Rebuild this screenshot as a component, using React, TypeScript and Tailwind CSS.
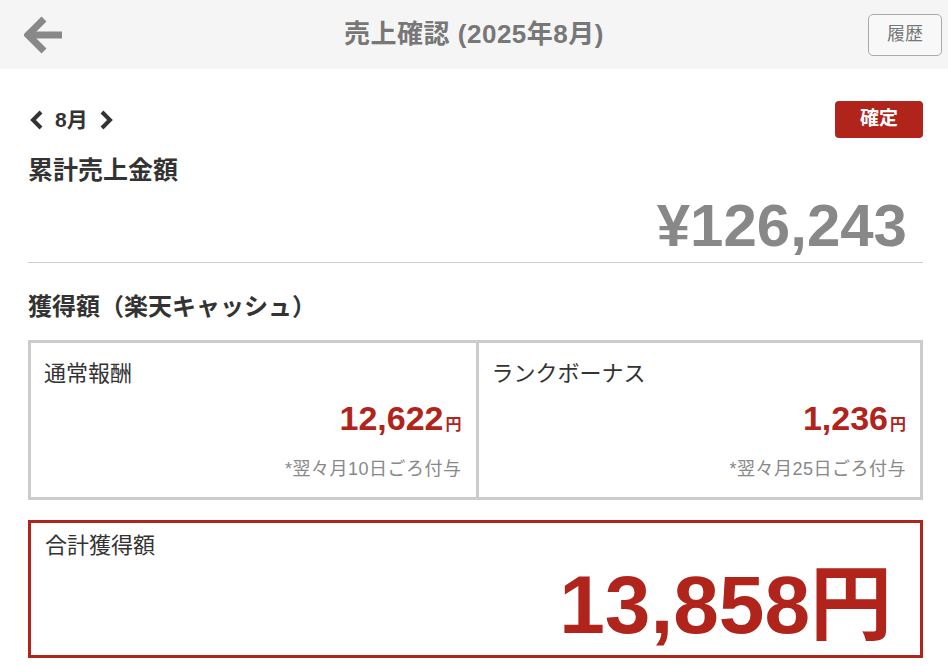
import React from 'react';

const RED = 'text-[#b0241c]';

const RewardCell: React.FC<{ label: string; amount: string; note: string; divider?: boolean }> = ({
  label,
  amount,
  note,
  divider,
}) => (
  <div className={`flex flex-col pl-[13px] pr-[14px] pt-[16px] pb-[15px] ${divider ? 'border-l-[3px] border-[#cccccc]' : ''}`}>
    <div className="text-[22px] leading-[30px] text-[#333]">{label}</div>
    <div className={`mt-[8px] flex items-baseline justify-end font-bold ${RED}`}>
      <span className="text-[34px] leading-[42px]">{amount}</span>
      <span className="ml-[2px] text-[16px]">円</span>
    </div>
    <div className="mt-[17px] text-right text-[18px] leading-[26px] tracking-[0.5px] text-[#888]">{note}</div>
  </div>
);

export default function App() {
  return (
    <div className="min-h-screen bg-white font-['Liberation_Sans','Noto_Sans_CJK_JP',sans-serif] text-[#333]">
      {/* Top bar */}
      <header className="grid h-[69px] grid-cols-[1fr_auto_1fr] items-center bg-[#f5f5f5]">
        <div className="pl-[24px]">
          <svg width="40" height="40" viewBox="0 0 40 40" className="block">
            <path d="M20 4 L4 20 L20 36" fill="none" stroke="#888" strokeWidth="7" strokeLinejoin="miter" />
            <path d="M6 20 H38" stroke="#888" strokeWidth="7" />
          </svg>
        </div>
        <h1 className="text-[26px] font-bold tracking-[0.5px] text-[#777]">売上確認 (2025年8月)</h1>
        <div className="flex justify-end pr-[6px]">
          <button className="h-[42px] w-[74px] rounded-[5px] border border-[#aaa] bg-[#f8f8f8] text-[18px] text-[#777]">
            履歴
          </button>
        </div>
      </header>

      <main className="pl-[28px] pr-[25px] pt-[32px]">
        {/* Month switcher */}
        <div className="flex items-center justify-between">
          <div className="flex items-center gap-[11px] pl-[1px] text-[21px] font-bold text-[#333]">
            <svg width="15" height="20" viewBox="0 0 15 20">
              <path d="M12 2 L4 10 L12 18" fill="none" stroke="#333" strokeWidth="4" />
            </svg>
            <span>8月</span>
            <svg width="15" height="20" viewBox="0 0 15 20">
              <path d="M3 2 L11 10 L3 18" fill="none" stroke="#333" strokeWidth="4" />
            </svg>
          </div>
          <button className="h-[37px] w-[88px] rounded-[4px] bg-[#b0241c] text-[19px] font-bold text-white">確定</button>
        </div>

        {/* Cumulative sales */}
        <h2 className="mt-[14px] text-[25px] font-bold leading-[36px]">累計売上金額</h2>
        <div className="mt-[6px] pr-[16px] text-right text-[60px] font-bold leading-[64px] text-[#888]">¥126,243</div>
        <hr className="mt-[4px] border-t border-[#cccccc]" />

        <h2 className="mt-[26px] text-[24px] font-bold leading-[36px]">獲得額（楽天キャッシュ）</h2>

        {/* Reward breakdown */}
        <div className="mt-[15px] grid grid-cols-2 border-[3px] border-[#cccccc]">
          <RewardCell label="通常報酬" amount="12,622" note="*翌々月10日ごろ付与" />
          <RewardCell label="ランクボーナス" amount="1,236" note="*翌々月25日ごろ付与" divider />
        </div>

        {/* Total */}
        <div className="mt-[20px] border-[3px] border-[#b0241c] pl-[14px] pr-[28px] pt-[8px] pb-[4px]">
          <div className="text-[22px] leading-[30px] text-[#333]">合計獲得額</div>
          <div className={`-mt-[3px] text-right text-[82px] font-bold leading-[93px] ${RED}`}>13,858円</div>
        </div>
      </main>
    </div>
  );
}
